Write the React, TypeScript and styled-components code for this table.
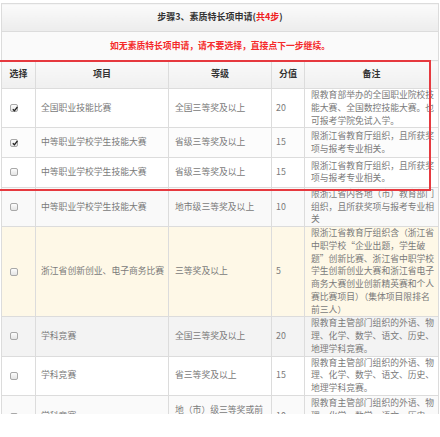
import React from "react";
import styled, { createGlobalStyle } from "styled-components";

const Global = createGlobalStyle`
  html, body { margin: 0; padding: 0; background: #fff; }
  body { font-family: "Noto Sans CJK SC", "Noto Sans", sans-serif; }
`;

const Frame = styled.div`
  position: relative;
  height: 414px;
  overflow: hidden;
  padding: 3px 0 0 1px;
  box-sizing: border-box;
`;

const Table = styled.table`
  width: 437px;
  table-layout: fixed;
  border-collapse: collapse;
  font-size: 8.8px;
  line-height: 12.75px;
  color: #7a7a7a;
`;

const TitleCell = styled.td`
  height: 27px;
  padding: 0;
  border: 1px solid #dcdcdc;
  background: linear-gradient(#fbfbfb, #ececec);
  text-align: center;
  font-size: 9px;
  font-weight: bold;
  color: #333;
`;

const Red = styled.span`
  color: #f02020;
`;

const MessageCell = styled.td`
  height: 28px;
  padding: 0;
  border: 1px solid #dcdcdc;
  background: #fafafa;
  text-align: center;
  font-size: 8.8px;
  font-weight: bold;
  color: #f52a2a;
`;

const HeadCell = styled.th`
  height: 27px;
  padding: 0;
  border: 1px solid #dcdcdc;
  background: linear-gradient(#fafafa, #efefef);
  text-align: center;
  font-size: 9px;
  font-weight: bold;
  color: #333;
`;

const Row = styled.tr<{ $bg: string }>`
  background: ${(p) => p.$bg};
`;

const Cell = styled.td<{ $pl?: number; $tight?: boolean }>`
  border: 1px solid #dcdcdc;
  padding: ${(p) => (p.$tight ? 0 : 8)}px 2px ${(p) => (p.$tight ? 0 : 8)}px
    ${(p) => p.$pl ?? 6}px;
  vertical-align: middle;
  text-align: left;
  overflow: hidden;
`;

const Box = styled.span`
  display: block;
  width: 8px;
  height: 8px;
  box-sizing: border-box;
  border: 1px solid #a8a8a8;
  border-radius: 2px;
  background: linear-gradient(#fdfdfd, #e4e4e4);
  position: relative;
`;

const Tick = styled.svg`
  position: absolute;
  left: -0.5px;
  top: -0.5px;
  width: 8px;
  height: 8px;
`;

const Overlay = styled.div`
  position: absolute;
  left: -4px;
  top: 60px;
  width: 435px;
  height: 131px;
  box-sizing: border-box;
  border: 2px solid #e6393f;
  pointer-events: none;
`;

type Item = {
  checked: boolean;
  name: string;
  level: string;
  score: string;
  note: string;
  bg: string;
};

const note2 = "限教育主管部门组织的外语、物理、化学、数学、语文、历史、地理学科竞赛。";

const items: Item[] = [
  {
    checked: true,
    name: "全国职业技能比赛",
    level: "全国三等奖及以上",
    score: "20",
    note: "限教育部举办的全国职业院校技能大赛、全国数控技能大赛。也可报考学院免试入学。",
    bg: "#ffffff",
  },
  {
    checked: true,
    name: "中等职业学校学生技能大赛",
    level: "省级三等奖及以上",
    score: "15",
    note: "限浙江省教育厅组织，且所获奖项与报考专业相关。",
    bg: "#fcfcfc",
  },
  {
    checked: false,
    name: "中等职业学校学生技能大赛",
    level: "省级三等奖及以上",
    score: "15",
    note: "限浙江省教育厅组织，且所获奖项与报考专业相关。",
    bg: "#ffffff",
  },
  {
    checked: false,
    name: "中等职业学校学生技能大赛",
    level: "地市级三等奖及以上",
    score: "10",
    note: "限浙江省内各地（市）教育部门组织，且所获奖项与报考专业相关",
    bg: "#f9f9f9",
  },
  {
    checked: false,
    name: "浙江省创新创业、电子商务比赛",
    level: "三等奖及以上",
    score: "5",
    note: "限浙江省教育厅组织含（浙江省中职学校“企业出题，学生破题”创新比赛、浙江省中职学校学生创新创业大赛和浙江省电子商务大赛创业创新精英赛和个人赛比赛项目）（集体项目限排名前三人）",
    bg: "#fef8e7",
  },
  {
    checked: false,
    name: "学科竞赛",
    level: "全国三等奖及以上",
    score: "20",
    note: note2,
    bg: "#f3f3f3",
  },
  {
    checked: false,
    name: "学科竞赛",
    level: "省三等奖及以上",
    score: "15",
    note: note2,
    bg: "#ffffff",
  },
  {
    checked: false,
    name: "学科竞赛",
    level: "地（市）级三等奖或前三名",
    score: "10",
    note: note2,
    bg: "#fafafa",
  },
];

function Check({ checked }: { checked: boolean }) {
  return (
    <Box>
      {checked && (
        <Tick viewBox="0 0 8 8">
          <path d="M1.8 4.2 L3.4 5.8 L6.4 2" fill="none" stroke="#222" strokeWidth="1.3" />
        </Tick>
      )}
    </Box>
  );
}

export default function App() {
  return (
    <>
      <Global />
      <Frame>
        <Table>
          <colgroup>
            <col style={{ width: 34 }} />
            <col style={{ width: 133 }} />
            <col style={{ width: 103 }} />
            <col style={{ width: 33 }} />
            <col style={{ width: 134 }} />
          </colgroup>
          <tbody>
            <tr>
              <TitleCell colSpan={5}>
                步骤3、素质特长项申请(<Red>共4步</Red>)
              </TitleCell>
            </tr>
            <tr>
              <MessageCell colSpan={5}>
                如无素质特长项申请，请不要选择，直接点下一步继续。
              </MessageCell>
            </tr>
            <tr>
              <HeadCell>选择</HeadCell>
              <HeadCell>项目</HeadCell>
              <HeadCell>等级</HeadCell>
              <HeadCell>分值</HeadCell>
              <HeadCell>备注</HeadCell>
            </tr>
            {items.map((it, i) => (
              <Row key={i} $bg={it.bg}>
                <Cell $pl={8}>
                  <Check checked={it.checked} />
                </Cell>
                <Cell $pl={5}>{it.name}</Cell>
                <Cell>{it.level}</Cell>
                <Cell $pl={4}>{it.score}</Cell>
                <Cell $tight>{it.note}</Cell>
              </Row>
            ))}
          </tbody>
        </Table>
        <Overlay />
      </Frame>
    </>
  );
}
